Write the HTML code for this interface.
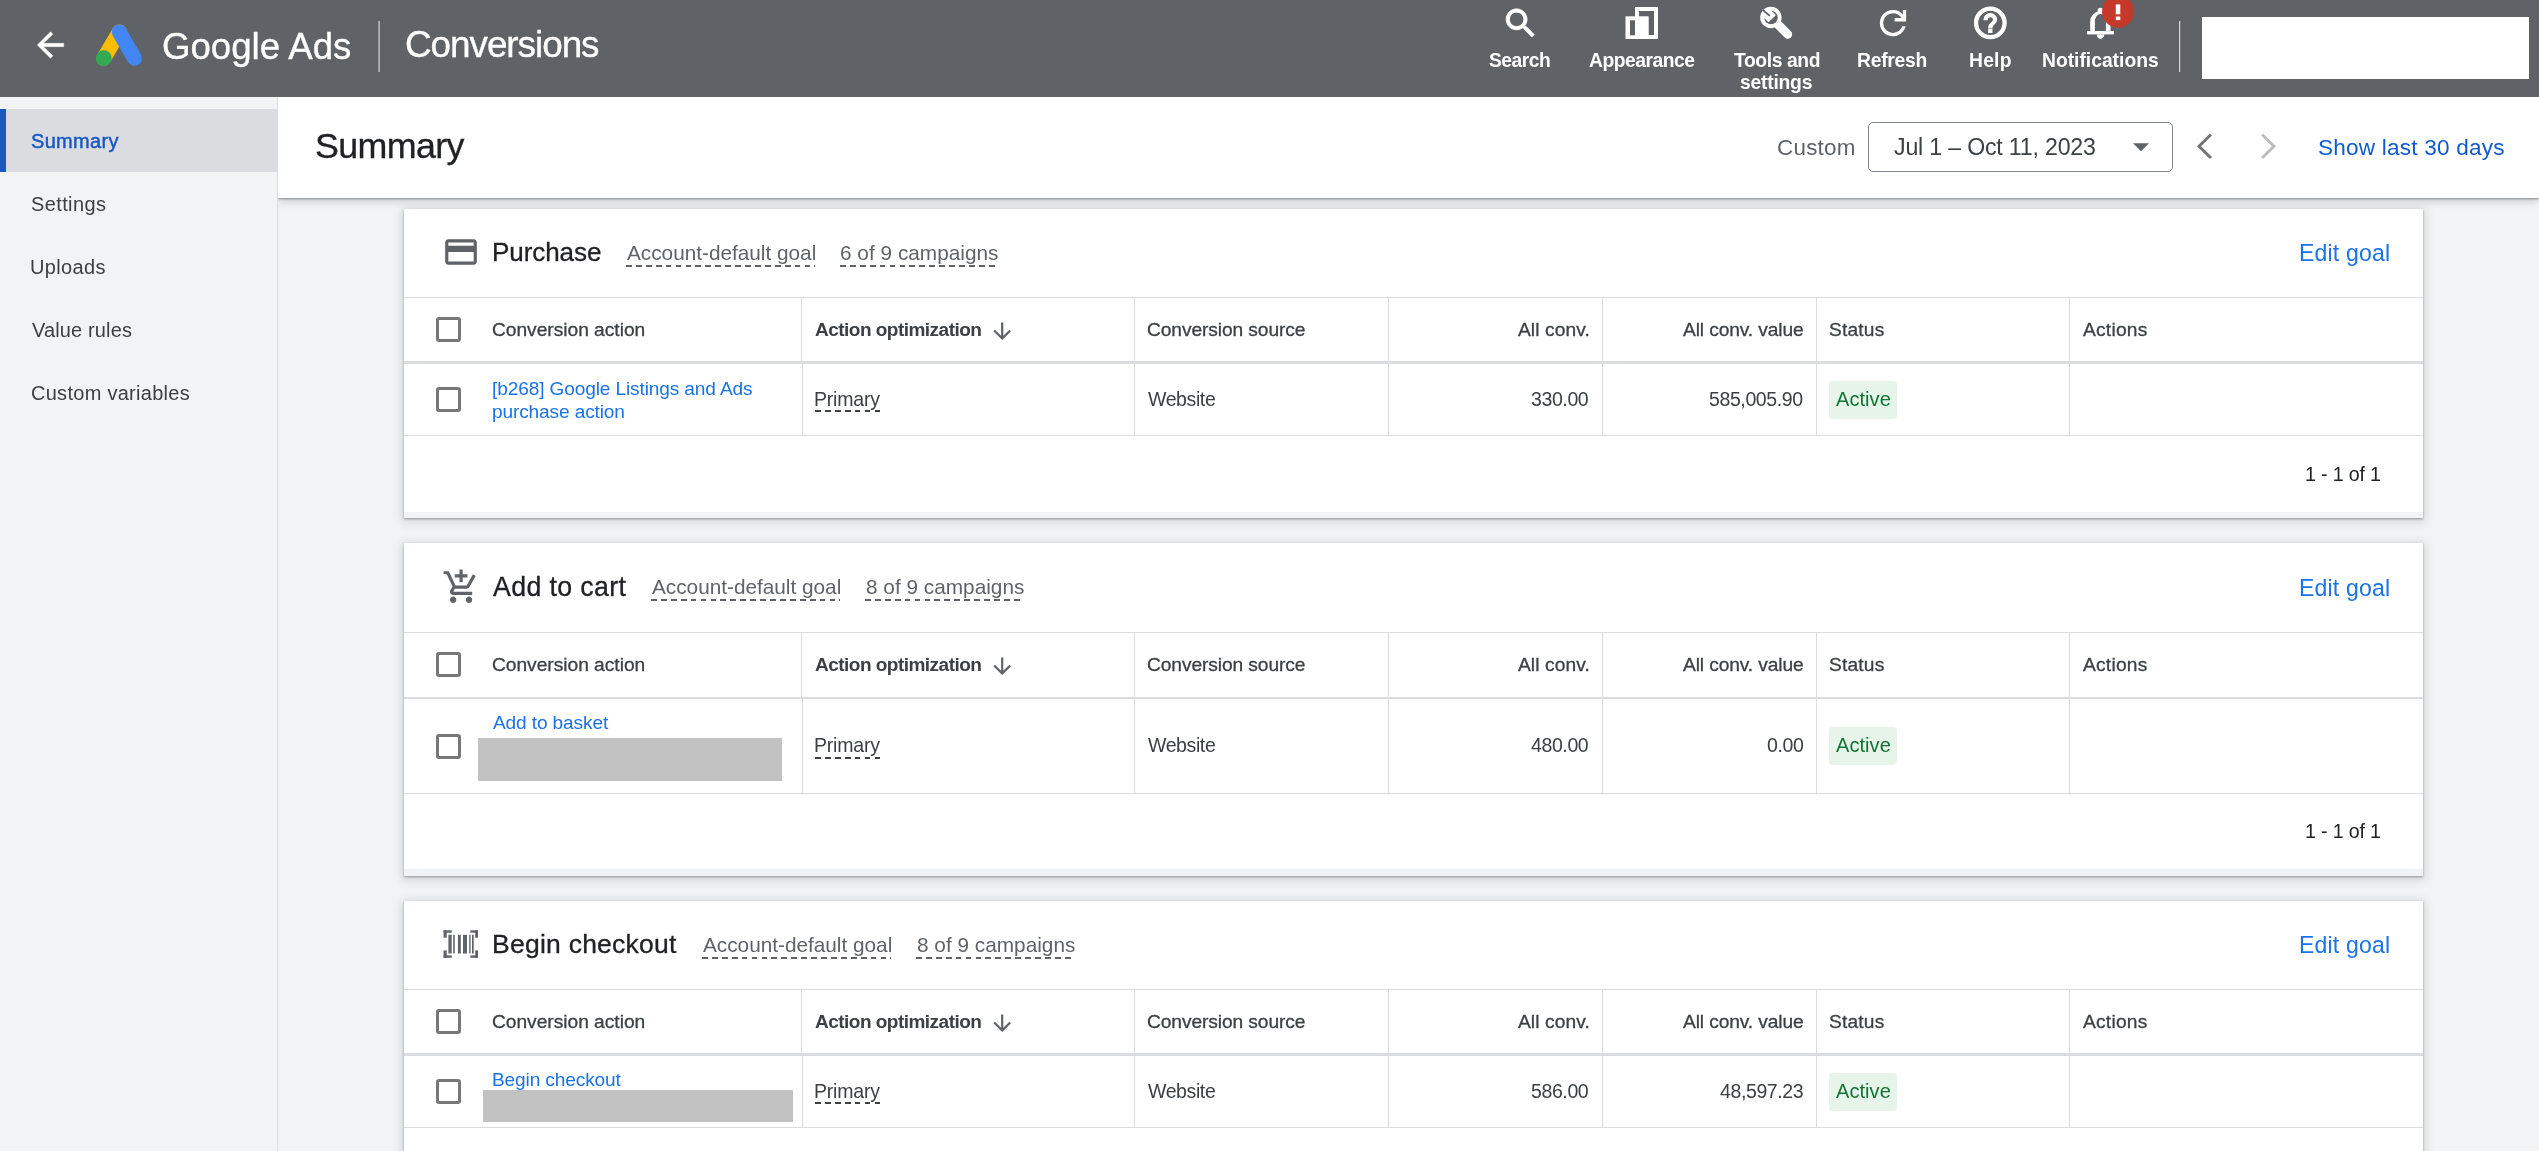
<!DOCTYPE html>
<html><head><meta charset="utf-8"><title>Conversions</title>
<style>
*{box-sizing:border-box;margin:0;padding:0}
html,body{width:2539px;height:1151px;overflow:hidden;background:#f1f3f4;font-family:"Liberation Sans",sans-serif;color:#3c4043;position:relative}
.t{position:absolute;white-space:nowrap;line-height:1;will-change:transform}
.r{position:absolute}
.dash{position:absolute;height:0}
#hdr{position:absolute;left:0;top:0;width:2539px;height:97px;background:#5f6368}
#nav{position:absolute;left:0;top:97px;width:278px;height:1054px;background:#f1f3f4;border-right:1px solid #dadce0}
#titlebar{position:absolute;left:278px;top:97px;width:2261px;height:101px;background:#fff;box-shadow:0 1px 2px rgba(60,64,67,.5),0 3px 8px rgba(60,64,67,.22);clip-path:inset(0 -30px -30px 0)}
.card{position:absolute;left:404px;width:2019px;background:#fff;box-shadow:0 1px 2px rgba(60,64,67,.45),0 2px 9px 2px rgba(60,64,67,.17)}
.cb{position:absolute;width:25px;height:25px;border:3px solid #787878;border-radius:3px}
.chip{position:absolute;width:68px;height:38px;background:#e6f4ea;border-radius:4px}
</style></head>
<body>
<div id="nav"></div>
<div class="r" style="left:0px;top:109px;width:277px;height:63px;background:#dadce0;"></div>
<div class="r" style="left:0px;top:109px;width:6px;height:63px;background:#1a5abc;"></div>
<div class="t" style="left:31.40px;top:131px;font-size:19.98px;letter-spacing:0.346px;color:#1557c4;-webkit-text-stroke:0.45px #1557c4;">Summary</div>
<div class="t" style="left:31.10px;top:194px;font-size:19.98px;letter-spacing:0.388px;color:#3c4043;">Settings</div>
<div class="t" style="left:30.45px;top:257px;font-size:19.98px;letter-spacing:0.369px;color:#3c4043;">Uploads</div>
<div class="t" style="left:31.90px;top:320px;font-size:19.98px;letter-spacing:0.154px;color:#3c4043;">Value rules</div>
<div class="t" style="left:31.00px;top:383px;font-size:19.98px;letter-spacing:0.296px;color:#3c4043;">Custom variables</div>
<div id="titlebar"></div>
<div class="t" style="left:315.29px;top:129px;font-size:35.82px;letter-spacing:-0.637px;color:#202124;-webkit-text-stroke:0.3px #202124;">Summary</div>
<div class="t" style="left:1776.78px;top:137px;font-size:22.41px;letter-spacing:0.253px;color:#5f6368;">Custom</div>
<div class="r" style="left:1868px;top:122px;width:305px;height:50px;border:1px solid #80868b;border-radius:5px"></div>
<div class="t" style="left:1894.45px;top:136px;font-size:23.15px;letter-spacing:-0.185px;color:#3c4043;">Jul 1 – Oct 11, 2023</div>
<svg class="r" width="2539" height="200" style="left:0;top:0"><polygon points="2133,143.2 2149,143.2 2141,151.2" fill="#5f6368"/><polyline points="2211,134.5 2199,146.3 2211,158" fill="none" stroke="#737373" stroke-width="2.9"/><polyline points="2262,134.5 2274,146.3 2262,158" fill="none" stroke="#bdbdbd" stroke-width="2.9"/></svg>
<div class="t" style="left:2318.28px;top:137px;font-size:22.59px;letter-spacing:0.210px;color:#0f5bd2;">Show last 30 days</div>
<div class="card" style="top:209px;height:309px"></div>
<svg class="r" width="38.04" height="38.04" viewBox="0 0 24 24" style="left:442.03px;top:232.8px"><path fill="#5f6368" d="M20 4H4c-1.11 0-1.99.89-1.99 2L2 18c0 1.11.89 2 2 2h16c1.11 0 2-.89 2-2V6c0-1.11-.89-2-2-2zm0 14H4v-6h16v6zm0-10H4V6h16v2z"/></svg>
<div class="t" style="left:491.95px;top:239px;font-size:26.03px;letter-spacing:-0.075px;color:#202124;-webkit-text-stroke:0.3px #202124;">Purchase</div>
<div class="t" style="left:627.05px;top:243px;font-size:20.78px;letter-spacing:-0.004px;color:#5f6368;">Account-default goal</div>
<div class="r" style="left:625.80px;top:265.07px;width:189.50px;height:2px;background:repeating-linear-gradient(90deg,#5f6368 0 5.8px,transparent 5.8px 9.92px)"></div>
<div class="t" style="left:840.36px;top:243px;font-size:20.78px;letter-spacing:0.024px;color:#5f6368;">6 of 9 campaigns</div>
<div class="r" style="left:840.40px;top:265.07px;width:158.00px;height:2px;background:repeating-linear-gradient(90deg,#5f6368 0 5.8px,transparent 5.8px 9.92px)"></div>
<div class="t" style="left:2299.15px;top:242px;font-size:23.06px;letter-spacing:0.181px;color:#1a73e8;">Edit goal</div>
<div class="r" style="left:404px;top:297px;width:2019px;height:1px;background:#dadce0;"></div>
<div class="r" style="left:404px;top:361px;width:2019px;height:3px;background:#dadce0;"></div>
<div class="r" style="left:404px;top:435px;width:2019px;height:1px;background:#dadce0;"></div>
<div class="r" style="left:801px;top:298px;width:1px;height:63px;background:#dadce0;"></div>
<div class="r" style="left:1134px;top:298px;width:1px;height:63px;background:#dadce0;"></div>
<div class="r" style="left:1388px;top:298px;width:1px;height:63px;background:#dadce0;"></div>
<div class="r" style="left:1602px;top:298px;width:1px;height:63px;background:#dadce0;"></div>
<div class="r" style="left:1816px;top:298px;width:1px;height:63px;background:#dadce0;"></div>
<div class="r" style="left:2069px;top:298px;width:1px;height:63px;background:#dadce0;"></div>
<div class="r" style="left:802px;top:364px;width:1px;height:71px;background:#dadce0;"></div>
<div class="r" style="left:1134px;top:364px;width:1px;height:71px;background:#dadce0;"></div>
<div class="r" style="left:1388px;top:364px;width:1px;height:71px;background:#dadce0;"></div>
<div class="r" style="left:1602px;top:364px;width:1px;height:71px;background:#dadce0;"></div>
<div class="r" style="left:1816px;top:364px;width:1px;height:71px;background:#dadce0;"></div>
<div class="r" style="left:2069px;top:364px;width:1px;height:71px;background:#dadce0;"></div>
<div class="cb" style="left:436px;top:317px"></div>
<div class="t" style="left:492.34px;top:320px;font-size:19.18px;letter-spacing:-0.016px;color:#3c4043;-webkit-text-stroke:0.3px #3c4043;">Conversion action</div>
<div class="t" style="left:814.90px;top:320px;font-size:19.03px;letter-spacing:-0.527px;color:#3c4043;font-weight:bold;">Action optimization</div>
<svg class="r" width="26.4" height="26.4" viewBox="0 0 24 24" style="left:988.6px;top:318.30px"><path fill="#5f6368" d="M20 12l-1.41-1.41L13 16.17V4h-2v12.17l-5.58-5.59L4 12l8 8 8-8z"/></svg>
<div class="t" style="left:1147.24px;top:320px;font-size:19.18px;letter-spacing:-0.086px;color:#3c4043;-webkit-text-stroke:0.3px #3c4043;">Conversion source</div>
<div class="t" style="left:1518.15px;top:320px;font-size:19.18px;letter-spacing:0.087px;color:#3c4043;-webkit-text-stroke:0.3px #3c4043;">All conv.</div>
<div class="t" style="left:1682.75px;top:320px;font-size:19.18px;letter-spacing:-0.106px;color:#3c4043;-webkit-text-stroke:0.3px #3c4043;">All conv. value</div>
<div class="t" style="left:1828.84px;top:320px;font-size:19.18px;letter-spacing:0.190px;color:#3c4043;-webkit-text-stroke:0.3px #3c4043;">Status</div>
<div class="t" style="left:2083.15px;top:320px;font-size:19.18px;letter-spacing:0.249px;color:#3c4043;-webkit-text-stroke:0.3px #3c4043;">Actions</div>
<div class="cb" style="left:436px;top:387px"></div>
<div class="t" style="left:492.21px;top:379px;font-size:19.09px;letter-spacing:-0.123px;color:#1a73e8;">[b268] Google Listings and Ads</div>
<div class="t" style="left:492.31px;top:402px;font-size:19.09px;letter-spacing:-0.123px;color:#1a73e8;">purchase action</div>
<div class="t" style="left:813.99px;top:390px;font-size:19.53px;letter-spacing:-0.201px;color:#3c4043;">Primary</div>
<div class="r" style="left:815.20px;top:410.04px;width:65.50px;height:2px;background:repeating-linear-gradient(90deg,#3c4043 0 5.8px,transparent 5.8px 9.92px)"></div>
<div class="t" style="left:1147.88px;top:390px;font-size:19.53px;letter-spacing:-0.400px;color:#3c4043;">Website</div>
<div class="t" style="left:1531.43px;top:390px;font-size:19.53px;letter-spacing:-0.400px;color:#3c4043;">330.00</div>
<div class="t" style="left:1709.30px;top:390px;font-size:19.53px;letter-spacing:-0.400px;color:#3c4043;">585,005.90</div>
<div class="chip" style="left:1829.1px;top:380.60px"></div>
<div class="t" style="left:1836.02px;top:389px;font-size:20.02px;letter-spacing:0.055px;color:#137333;">Active</div>
<div class="t" style="left:2304.73px;top:465px;font-size:19.57px;letter-spacing:-0.145px;color:#202124;">1 - 1 of 1</div>
<div class="r" style="left:404px;top:512px;width:2019px;height:6px;background:#f1f3f4;"></div>
<div class="card" style="top:543px;height:333px"></div>
<svg class="r" width="38.16" height="38.16" viewBox="0 0 24 24" style="left:441.8px;top:568.4px"><path fill="#5f6368" d="M11 9h2V6h3V4h-3V1h-2v3H8v2h3v3zm-4 9c-1.1 0-1.99.9-1.99 2S5.9 22 7 22s2-.9 2-2-.9-2-2-2zm10 0c-1.1 0-1.99.9-1.99 2s.89 2 1.990 2 2-.9 2-2-.9-2-2-2zm-9.830-3.25l.03-.12.9-1.63h7.45c.75 0 1.41-.41 1.75-1.03l3.86-7.01L19.42 4h-.01l-1.1 2-2.76 5H8.53l-.13-.27L6.16 6l-.95-2-.94-2H1v2h2l3.6 7.590-1.35 2.45c-.16.28-.25.61-.25.96 0 1.1.9 2 2 2h12v-2H7.42c-.13 0-.25-.11-.25-.25z"/></svg>
<div class="t" style="left:492.73px;top:574px;font-size:26.75px;letter-spacing:0.353px;color:#202124;-webkit-text-stroke:0.3px #202124;">Add to cart</div>
<div class="t" style="left:652.15px;top:577px;font-size:20.78px;letter-spacing:-0.004px;color:#5f6368;">Account-default goal</div>
<div class="r" style="left:650.90px;top:599.20px;width:189.50px;height:2px;background:repeating-linear-gradient(90deg,#5f6368 0 5.8px,transparent 5.8px 9.92px)"></div>
<div class="t" style="left:865.52px;top:577px;font-size:20.78px;letter-spacing:0.013px;color:#5f6368;">8 of 9 campaigns</div>
<div class="r" style="left:865.40px;top:599.20px;width:158.00px;height:2px;background:repeating-linear-gradient(90deg,#5f6368 0 5.8px,transparent 5.8px 9.92px)"></div>
<div class="t" style="left:2299.15px;top:577px;font-size:23.06px;letter-spacing:0.181px;color:#1a73e8;">Edit goal</div>
<div class="r" style="left:404px;top:632px;width:2019px;height:1px;background:#dadce0;"></div>
<div class="r" style="left:404px;top:697px;width:2019px;height:2px;background:#dadce0;"></div>
<div class="r" style="left:404px;top:793px;width:2019px;height:1px;background:#dadce0;"></div>
<div class="r" style="left:801px;top:633px;width:1px;height:64px;background:#dadce0;"></div>
<div class="r" style="left:1134px;top:633px;width:1px;height:64px;background:#dadce0;"></div>
<div class="r" style="left:1388px;top:633px;width:1px;height:64px;background:#dadce0;"></div>
<div class="r" style="left:1602px;top:633px;width:1px;height:64px;background:#dadce0;"></div>
<div class="r" style="left:1816px;top:633px;width:1px;height:64px;background:#dadce0;"></div>
<div class="r" style="left:2069px;top:633px;width:1px;height:64px;background:#dadce0;"></div>
<div class="r" style="left:802px;top:699px;width:1px;height:94px;background:#dadce0;"></div>
<div class="r" style="left:1134px;top:699px;width:1px;height:94px;background:#dadce0;"></div>
<div class="r" style="left:1388px;top:699px;width:1px;height:94px;background:#dadce0;"></div>
<div class="r" style="left:1602px;top:699px;width:1px;height:94px;background:#dadce0;"></div>
<div class="r" style="left:1816px;top:699px;width:1px;height:94px;background:#dadce0;"></div>
<div class="r" style="left:2069px;top:699px;width:1px;height:94px;background:#dadce0;"></div>
<div class="cb" style="left:436px;top:652px"></div>
<div class="t" style="left:492.34px;top:655px;font-size:19.18px;letter-spacing:-0.016px;color:#3c4043;-webkit-text-stroke:0.3px #3c4043;">Conversion action</div>
<div class="t" style="left:814.90px;top:655px;font-size:19.03px;letter-spacing:-0.527px;color:#3c4043;font-weight:bold;">Action optimization</div>
<svg class="r" width="26.4" height="26.4" viewBox="0 0 24 24" style="left:988.6px;top:653.30px"><path fill="#5f6368" d="M20 12l-1.41-1.41L13 16.17V4h-2v12.17l-5.58-5.59L4 12l8 8 8-8z"/></svg>
<div class="t" style="left:1147.24px;top:655px;font-size:19.18px;letter-spacing:-0.086px;color:#3c4043;-webkit-text-stroke:0.3px #3c4043;">Conversion source</div>
<div class="t" style="left:1518.15px;top:655px;font-size:19.18px;letter-spacing:0.087px;color:#3c4043;-webkit-text-stroke:0.3px #3c4043;">All conv.</div>
<div class="t" style="left:1682.75px;top:655px;font-size:19.18px;letter-spacing:-0.106px;color:#3c4043;-webkit-text-stroke:0.3px #3c4043;">All conv. value</div>
<div class="t" style="left:1828.84px;top:655px;font-size:19.18px;letter-spacing:0.190px;color:#3c4043;-webkit-text-stroke:0.3px #3c4043;">Status</div>
<div class="t" style="left:2083.15px;top:655px;font-size:19.18px;letter-spacing:0.249px;color:#3c4043;-webkit-text-stroke:0.3px #3c4043;">Actions</div>
<div class="cb" style="left:436px;top:734px"></div>
<div class="t" style="left:492.70px;top:713px;font-size:19.09px;letter-spacing:-0.123px;color:#1a73e8;">Add to basket</div>
<div class="r" style="left:478px;top:738px;width:304px;height:43px;background:#c2c2c2;"></div>
<div class="t" style="left:813.99px;top:736px;font-size:19.53px;letter-spacing:-0.201px;color:#3c4043;">Primary</div>
<div class="r" style="left:815.20px;top:756.54px;width:65.50px;height:2px;background:repeating-linear-gradient(90deg,#3c4043 0 5.8px,transparent 5.8px 9.92px)"></div>
<div class="t" style="left:1147.88px;top:736px;font-size:19.53px;letter-spacing:-0.400px;color:#3c4043;">Website</div>
<div class="t" style="left:1531.43px;top:736px;font-size:19.53px;letter-spacing:-0.400px;color:#3c4043;">480.00</div>
<div class="t" style="left:1766.65px;top:736px;font-size:19.53px;letter-spacing:-0.400px;color:#3c4043;">0.00</div>
<div class="chip" style="left:1829.1px;top:727.10px"></div>
<div class="t" style="left:1836.02px;top:735px;font-size:20.02px;letter-spacing:0.055px;color:#137333;">Active</div>
<div class="t" style="left:2304.73px;top:822px;font-size:19.57px;letter-spacing:-0.145px;color:#202124;">1 - 1 of 1</div>
<div class="r" style="left:404px;top:869px;width:2019px;height:7px;background:#f1f3f4;"></div>
<div class="card" style="top:901px;height:399px"></div>
<svg class="r" width="2539" height="1151" style="left:0;top:0"><rect x="443.60" y="930.30" width="8.10" height="2.40" fill="#5f6368"/><rect x="443.60" y="930.30" width="3.10" height="7.40" fill="#5f6368"/><rect x="470.40" y="930.30" width="7.60" height="2.40" fill="#5f6368"/><rect x="475.20" y="930.30" width="2.80" height="7.40" fill="#5f6368"/><rect x="443.60" y="955.40" width="8.10" height="2.40" fill="#5f6368"/><rect x="443.60" y="950.40" width="3.10" height="7.40" fill="#5f6368"/><rect x="470.40" y="955.40" width="7.60" height="2.40" fill="#5f6368"/><rect x="475.20" y="950.40" width="2.80" height="7.40" fill="#5f6368"/><rect x="448.40" y="934.80" width="3.30" height="18.70" fill="#5f6368"/><rect x="453.20" y="934.80" width="1.60" height="18.70" fill="#5f6368"/><rect x="457.95" y="934.80" width="2.85" height="18.70" fill="#5f6368"/><rect x="463.00" y="934.80" width="4.00" height="18.70" fill="#5f6368"/><rect x="469.20" y="934.80" width="1.40" height="18.70" fill="#5f6368"/><rect x="472.00" y="934.80" width="1.70" height="18.70" fill="#5f6368"/></svg>
<div class="t" style="left:491.91px;top:931px;font-size:26.50px;letter-spacing:0.248px;color:#202124;-webkit-text-stroke:0.3px #202124;">Begin checkout</div>
<div class="t" style="left:702.79px;top:935px;font-size:20.78px;letter-spacing:-0.004px;color:#5f6368;">Account-default goal</div>
<div class="r" style="left:701.54px;top:956.84px;width:189.50px;height:2px;background:repeating-linear-gradient(90deg,#5f6368 0 5.8px,transparent 5.8px 9.92px)"></div>
<div class="t" style="left:916.52px;top:935px;font-size:20.78px;letter-spacing:0.013px;color:#5f6368;">8 of 9 campaigns</div>
<div class="r" style="left:916.40px;top:956.84px;width:158.00px;height:2px;background:repeating-linear-gradient(90deg,#5f6368 0 5.8px,transparent 5.8px 9.92px)"></div>
<div class="t" style="left:2299.15px;top:934px;font-size:23.06px;letter-spacing:0.181px;color:#1a73e8;">Edit goal</div>
<div class="r" style="left:404px;top:989px;width:2019px;height:1px;background:#dadce0;"></div>
<div class="r" style="left:404px;top:1053px;width:2019px;height:3px;background:#dadce0;"></div>
<div class="r" style="left:404px;top:1127px;width:2019px;height:1px;background:#dadce0;"></div>
<div class="r" style="left:801px;top:990px;width:1px;height:63px;background:#dadce0;"></div>
<div class="r" style="left:1134px;top:990px;width:1px;height:63px;background:#dadce0;"></div>
<div class="r" style="left:1388px;top:990px;width:1px;height:63px;background:#dadce0;"></div>
<div class="r" style="left:1602px;top:990px;width:1px;height:63px;background:#dadce0;"></div>
<div class="r" style="left:1816px;top:990px;width:1px;height:63px;background:#dadce0;"></div>
<div class="r" style="left:2069px;top:990px;width:1px;height:63px;background:#dadce0;"></div>
<div class="r" style="left:802px;top:1056px;width:1px;height:71px;background:#dadce0;"></div>
<div class="r" style="left:1134px;top:1056px;width:1px;height:71px;background:#dadce0;"></div>
<div class="r" style="left:1388px;top:1056px;width:1px;height:71px;background:#dadce0;"></div>
<div class="r" style="left:1602px;top:1056px;width:1px;height:71px;background:#dadce0;"></div>
<div class="r" style="left:1816px;top:1056px;width:1px;height:71px;background:#dadce0;"></div>
<div class="r" style="left:2069px;top:1056px;width:1px;height:71px;background:#dadce0;"></div>
<div class="cb" style="left:436px;top:1009px"></div>
<div class="t" style="left:492.34px;top:1012px;font-size:19.18px;letter-spacing:-0.016px;color:#3c4043;-webkit-text-stroke:0.3px #3c4043;">Conversion action</div>
<div class="t" style="left:814.90px;top:1012px;font-size:19.03px;letter-spacing:-0.527px;color:#3c4043;font-weight:bold;">Action optimization</div>
<svg class="r" width="26.4" height="26.4" viewBox="0 0 24 24" style="left:988.6px;top:1010.30px"><path fill="#5f6368" d="M20 12l-1.41-1.41L13 16.17V4h-2v12.17l-5.58-5.59L4 12l8 8 8-8z"/></svg>
<div class="t" style="left:1147.24px;top:1012px;font-size:19.18px;letter-spacing:-0.086px;color:#3c4043;-webkit-text-stroke:0.3px #3c4043;">Conversion source</div>
<div class="t" style="left:1518.15px;top:1012px;font-size:19.18px;letter-spacing:0.087px;color:#3c4043;-webkit-text-stroke:0.3px #3c4043;">All conv.</div>
<div class="t" style="left:1682.75px;top:1012px;font-size:19.18px;letter-spacing:-0.106px;color:#3c4043;-webkit-text-stroke:0.3px #3c4043;">All conv. value</div>
<div class="t" style="left:1828.84px;top:1012px;font-size:19.18px;letter-spacing:0.190px;color:#3c4043;-webkit-text-stroke:0.3px #3c4043;">Status</div>
<div class="t" style="left:2083.15px;top:1012px;font-size:19.18px;letter-spacing:0.249px;color:#3c4043;-webkit-text-stroke:0.3px #3c4043;">Actions</div>
<div class="cb" style="left:436px;top:1079px"></div>
<div class="t" style="left:491.72px;top:1070px;font-size:19.09px;letter-spacing:-0.123px;color:#1a73e8;">Begin checkout</div>
<div class="r" style="left:483px;top:1090px;width:310px;height:32px;background:#c2c2c2;"></div>
<div class="t" style="left:813.99px;top:1082px;font-size:19.53px;letter-spacing:-0.201px;color:#3c4043;">Primary</div>
<div class="r" style="left:815.20px;top:1102.04px;width:65.50px;height:2px;background:repeating-linear-gradient(90deg,#3c4043 0 5.8px,transparent 5.8px 9.92px)"></div>
<div class="t" style="left:1147.88px;top:1082px;font-size:19.53px;letter-spacing:-0.400px;color:#3c4043;">Website</div>
<div class="t" style="left:1531.43px;top:1082px;font-size:19.53px;letter-spacing:-0.400px;color:#3c4043;">586.00</div>
<div class="t" style="left:1719.89px;top:1082px;font-size:19.53px;letter-spacing:-0.400px;color:#3c4043;">48,597.23</div>
<div class="chip" style="left:1829.1px;top:1072.60px"></div>
<div class="t" style="left:1836.02px;top:1081px;font-size:20.02px;letter-spacing:0.055px;color:#137333;">Active</div>
<div id="hdr">
<svg class="r" width="2539" height="97" viewBox="0 0 2539 97" style="left:0;top:0"><g transform="translate(30.7,25.2) scale(1.65)"><path fill="#fff" stroke="#fff" stroke-width="0.25" d="M20 11H7.83l5.59-5.59L12 4l-8 8 8 8 1.41-1.41L7.83 13H20v-2z"/></g><line x1="119.3" y1="32" x2="103.8" y2="58.2" stroke="#fbbc04" stroke-width="15" stroke-linecap="round"/><line x1="119.3" y1="32" x2="134.4" y2="58.2" stroke="#4285f4" stroke-width="15" stroke-linecap="round"/><circle cx="103.8" cy="58.2" r="7.9" fill="#34a853"/><rect x="378.5" y="21" width="1.2" height="51" fill="#d5d6d8"/><rect x="2179" y="21" width="1.2" height="51" fill="#d5d6d8"/><rect x="2202" y="17" width="327" height="62" fill="#fff"/><g transform="translate(1501.4,4.15) scale(1.6)"><path fill="#fff" stroke="#fff" stroke-width="0.6" d="M15.5 14h-.79l-.28-.27C15.41 12.59 16 11.11 16 9.5 16 5.91 13.09 3 9.5 3S3 5.91 3 9.5 5.91 16 9.5 16c1.610 0 3.09-.59 4.23-1.57l.27.28v.79l5 4.99L20.49 19l-4.99-5zm-6 0C7.01 14 5 11.99 5 9.5S7.01 5 9.5 5 14 7.01 14 9.5 11.99 14 9.5 14z"/></g><rect x="1635" y="7" width="23" height="32" fill="#fff"/><rect x="1639" y="11" width="15" height="24" fill="#5f6368"/><rect x="1625.5" y="16.3" width="23.2" height="22.7" fill="#fff"/><rect x="1630" y="20.3" width="5" height="15" fill="#5f6368"/><line x1="1774" y1="20.5" x2="1787.8" y2="34.3" stroke="#fff" stroke-width="8.7" stroke-linecap="round"/><circle cx="1770.9" cy="17.5" r="10.7" fill="#fff"/><circle cx="1771" cy="17.5" r="6.8" fill="#5f6368"/><polygon points="1764.21,17.99 1768.55,22.16 1775.85,15.21 1771.68,10.69 1761.95,8.95" fill="#fff"/><line x1="1762.3" y1="9.5" x2="1769.77" y2="15.9" stroke="#5f6368" stroke-width="1.8"/><g transform="translate(1873.27,42.78) scale(0.0411)"><path fill="#fff" d="M480-160q-134 0-227-93t-93-227q0-134 93-227t227-93q69 0 132 28.5T720-690v-110h80v280H520v-80h168q-32-56-87.5-88T480-720q-100 0-170 70t-70 170q0 100 70 170t170 70q77 0 139-44t87-116h84q-28 106-114 173t-196 67Z"/></g><g transform="translate(1971.3,3.93) scale(1.585)"><path fill="#fff" stroke="#fff" stroke-width="0.7" d="M11 18h2v-2h-2v2zm1-16C6.48 2 2 6.48 2 12s4.48 10 10 10 10-4.48 10-10S17.52 2 12 2zm0 18c-4.41 0-8-3.59-8-8s3.59-8 8-8 8 3.59 8 8-3.590 8-8 8zm0-14c-2.21 0-4 1.79-4 4h2c0-1.1.9-2 2-2s2 .9 2 2c0 2-3 1.75-3 5h2c0-2.25 3-2.5 3-5 0-2.21-1.79-4-4-4z"/></g><rect x="2087.1" y="31.05" width="26.8" height="3.35" fill="#fff"/><path fill="#fff" d="M2090.2,31.2 V21.45 A10.15,10.15 0 0 1 2110.5,21.45 V31.2 H2105.9 V21.45 A5.5,7.39 0 0 0 2094.9,21.45 V31.2 Z"/><circle cx="2100.4" cy="10.5" r="2.7" fill="#fff"/><rect x="2097.7" y="10.5" width="5.4" height="3" fill="#fff"/><path fill="#fff" d="M2096.7,34.4 H2104.3 A3.8,4.5 0 0 1 2096.7,34.4 Z"/><circle cx="2118" cy="11.6" r="16" fill="#c5392b"/><rect x="2115.8" y="4.4" width="4.5" height="9.9" fill="#fff"/><rect x="2115.8" y="16.5" width="4.5" height="3.6" fill="#fff"/></svg>
<div class="t" style="left:162.07px;top:29px;font-size:36.63px;letter-spacing:0.003px;color:#fff;-webkit-text-stroke:0.35px #fff;">Google Ads</div>
<div class="t" style="left:405.16px;top:27px;font-size:36.84px;letter-spacing:-1.019px;color:#fff;-webkit-text-stroke:0.35px #fff;">Conversions</div>
<div class="t" style="left:1489.22px;top:51px;font-size:19.29px;letter-spacing:-0.498px;color:#fff;font-weight:bold;">Search</div>
<div class="t" style="left:1588.72px;top:51px;font-size:19.29px;letter-spacing:-0.486px;color:#fff;font-weight:bold;">Appearance</div>
<div class="t" style="left:1733.61px;top:51px;font-size:19.29px;letter-spacing:-0.387px;color:#fff;font-weight:bold;">Tools and</div>
<div class="t" style="left:1857.40px;top:51px;font-size:19.29px;letter-spacing:-0.257px;color:#fff;font-weight:bold;">Refresh</div>
<div class="t" style="left:1968.70px;top:51px;font-size:19.29px;letter-spacing:0.238px;color:#fff;font-weight:bold;">Help</div>
<div class="t" style="left:2041.50px;top:51px;font-size:19.29px;letter-spacing:-0.010px;color:#fff;font-weight:bold;">Notifications</div>
<div class="t" style="left:1740.22px;top:73px;font-size:19.29px;letter-spacing:-0.225px;color:#fff;font-weight:bold;">settings</div>
</div>
</body></html>
